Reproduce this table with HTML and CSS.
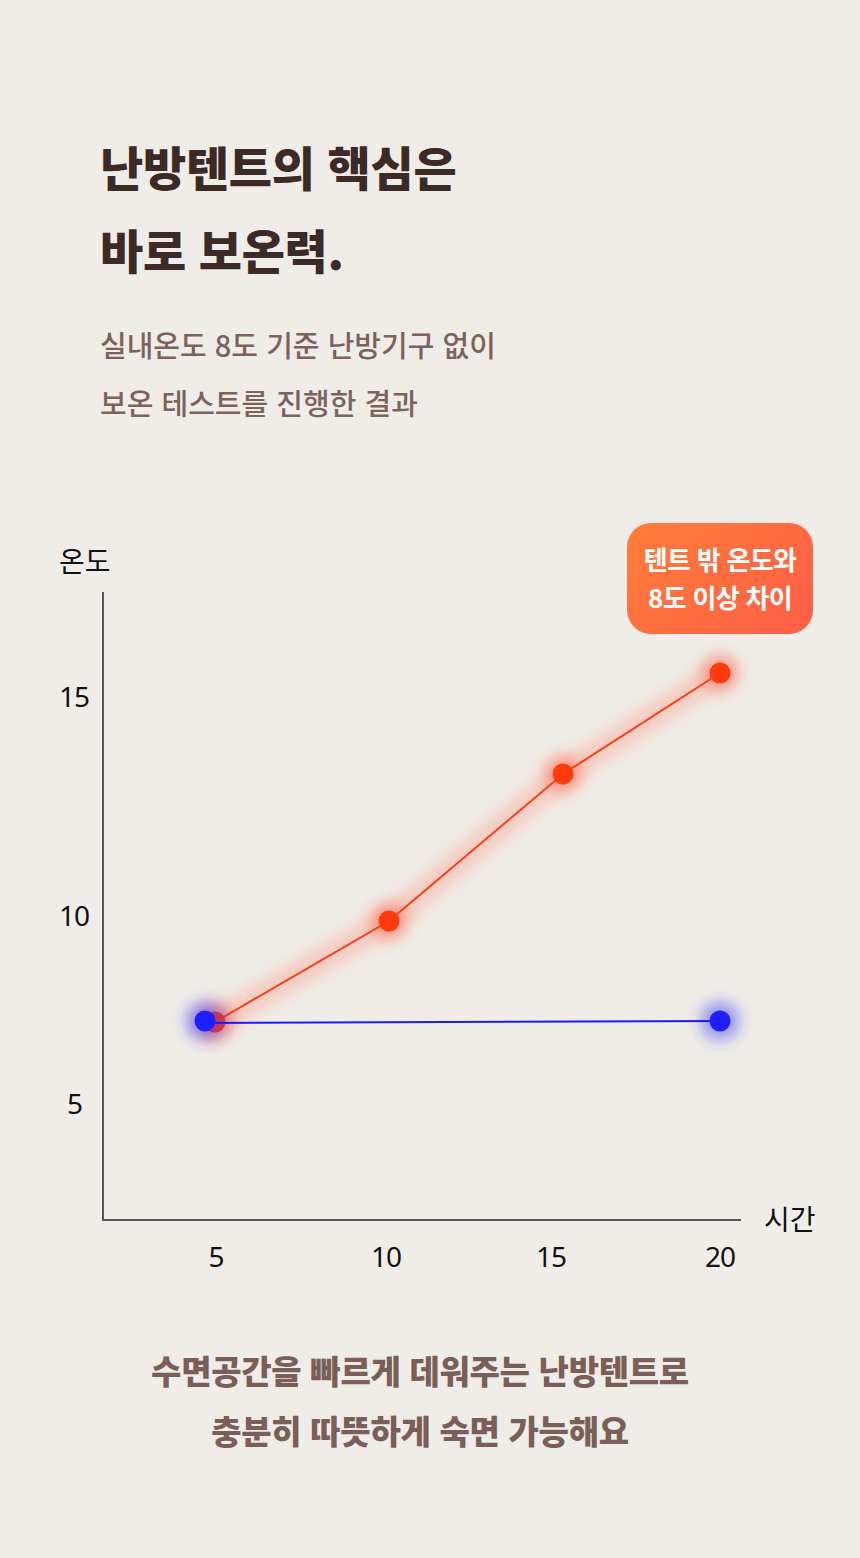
FILE: index.html
```html
<!DOCTYPE html>
<html lang="ko">
<head>
<meta charset="utf-8">
<title>난방텐트 보온력</title>
<link rel="stylesheet" href="styles.css">
</head>
<body>
<main class="page">
  <section class="intro">
    <h1 class="title">난방텐트의 핵심은<br>바로 보온력.</h1>
    <p class="lead">실내온도 8도 기준 난방기구 없이<br>보온 테스트를 진행한 결과</p>
  </section>

  <section class="chart">
    <svg class="chart-svg" width="860" height="800" viewBox="0 500 860 800" xmlns="http://www.w3.org/2000/svg">
      <defs>
        <filter id="blurL" x="-30%" y="-30%" width="160%" height="160%">
          <feGaussianBlur stdDeviation="8"/>
        </filter>
        <filter id="blurS" x="-100%" y="-100%" width="300%" height="300%">
          <feGaussianBlur stdDeviation="7"/>
        </filter>
      </defs>

      <text class="axis-title" x="59" y="572">온도</text>
      <text class="axis-title" x="764" y="1230">시간</text>

      <text class="tick" x="89" y="707" text-anchor="end">15</text>
      <text class="tick" x="89" y="926" text-anchor="end">10</text>
      <text class="tick" x="82" y="1114" text-anchor="end">5</text>

      <text class="tick" x="216" y="1267" text-anchor="middle">5</text>
      <text class="tick" x="386" y="1267" text-anchor="middle">10</text>
      <text class="tick" x="551" y="1267" text-anchor="middle">15</text>
      <text class="tick" x="720" y="1267" text-anchor="middle">20</text>

      <path d="M103 592 V1220 H741" fill="none" stroke="#555" stroke-width="2"/>

      <!-- red series glow -->
      <polyline points="215,1022 389,921 563,774 720,673" fill="none" stroke="#ff7a60" stroke-opacity="0.32" stroke-width="24" stroke-linecap="round" stroke-linejoin="round" filter="url(#blurL)"/>
      <g fill="#ff5a3a" fill-opacity="0.45" filter="url(#blurS)">
        <circle cx="215" cy="1022" r="19"/>
        <circle cx="389" cy="921" r="19"/>
        <circle cx="563" cy="774" r="19"/>
        <circle cx="720" cy="673" r="19"/>
      </g>
      <polyline points="215,1022 389,921 563,774 720,673" fill="none" stroke="#ff3a14" stroke-width="2"/>
      <g fill="#ff3a0c">
        <circle cx="215" cy="1022" r="10.5"/>
        <circle cx="389" cy="921" r="10.5"/>
        <circle cx="563" cy="774" r="10.5"/>
        <circle cx="720" cy="673" r="10.5"/>
      </g>

      <!-- blue series -->
      <g fill="#3535ff" fill-opacity="0.45" filter="url(#blurS)">
        <circle cx="205" cy="1021" r="20"/>
        <circle cx="720" cy="1021" r="20"/>
      </g>
      <line x1="205" y1="1023" x2="720" y2="1021" stroke="#1a1aff" stroke-width="2"/>
      <g fill="#1e1eff">
        <circle cx="205" cy="1021" r="10.5"/>
        <circle cx="720" cy="1021" r="10.5"/>
      </g>
    </svg>
    <div class="badge">텐트 밖 온도와<br>8도 이상 차이</div>
  </section>

  <p class="closing">수면공간을 빠르게 데워주는 난방텐트로<br>충분히 따뜻하게 숙면 가능해요</p>
</main>
</body>
</html>
```

FILE: styles.css
```css
html, body {
  margin: 0;
  padding: 0;
  background: #f0ede8;
}

.page {
  width: 860px;
  height: 1558px;
  overflow: hidden;
  font-family: "Noto Sans CJK KR", "Noto Sans", sans-serif;
  background: #f0ede8;
}

.intro {
  padding: 124px 0 0 100px;
}

.title {
  margin: 0;
  font-size: 47px;
  line-height: 83px;
  font-weight: 900;
  letter-spacing: -0.3px;
  color: #3b2a26;
}

.lead {
  margin: 25px 0 0;
  font-size: 29px;
  line-height: 58px;
  font-weight: 500;
  letter-spacing: 0;
  color: #7b625b;
}

.chart {
  position: relative;
  margin-top: 69px;
  height: 800px;
}

.chart-svg {
  display: block;
}

.axis-title {
  font-family: "Noto Sans CJK KR", sans-serif;
  font-size: 28px;
  letter-spacing: 0;
  fill: #111;
}

.tick {
  font-family: "Noto Sans", "Noto Sans CJK KR", sans-serif;
  font-size: 28px;
  letter-spacing: -1px;
  fill: #111;
}

.badge {
  position: absolute;
  left: 627px;
  top: 23px;
  width: 186px;
  height: 111px;
  box-sizing: border-box;
  padding-top: 17px;
  border-radius: 24px;
  background: linear-gradient(135deg, #ff7e3a 0%, #ff6a40 60%, #ff5e48 100%);
  color: #fff;
  text-align: center;
  font-size: 26px;
  line-height: 38px;
  font-weight: 700;
  letter-spacing: -0.7px;
}

.closing {
  margin: 40px 0 0;
  padding-right: 20px;
  text-align: center;
  font-size: 33px;
  line-height: 60px;
  font-weight: 800;
  letter-spacing: -0.3px;
  color: #7a5f59;
}
```
